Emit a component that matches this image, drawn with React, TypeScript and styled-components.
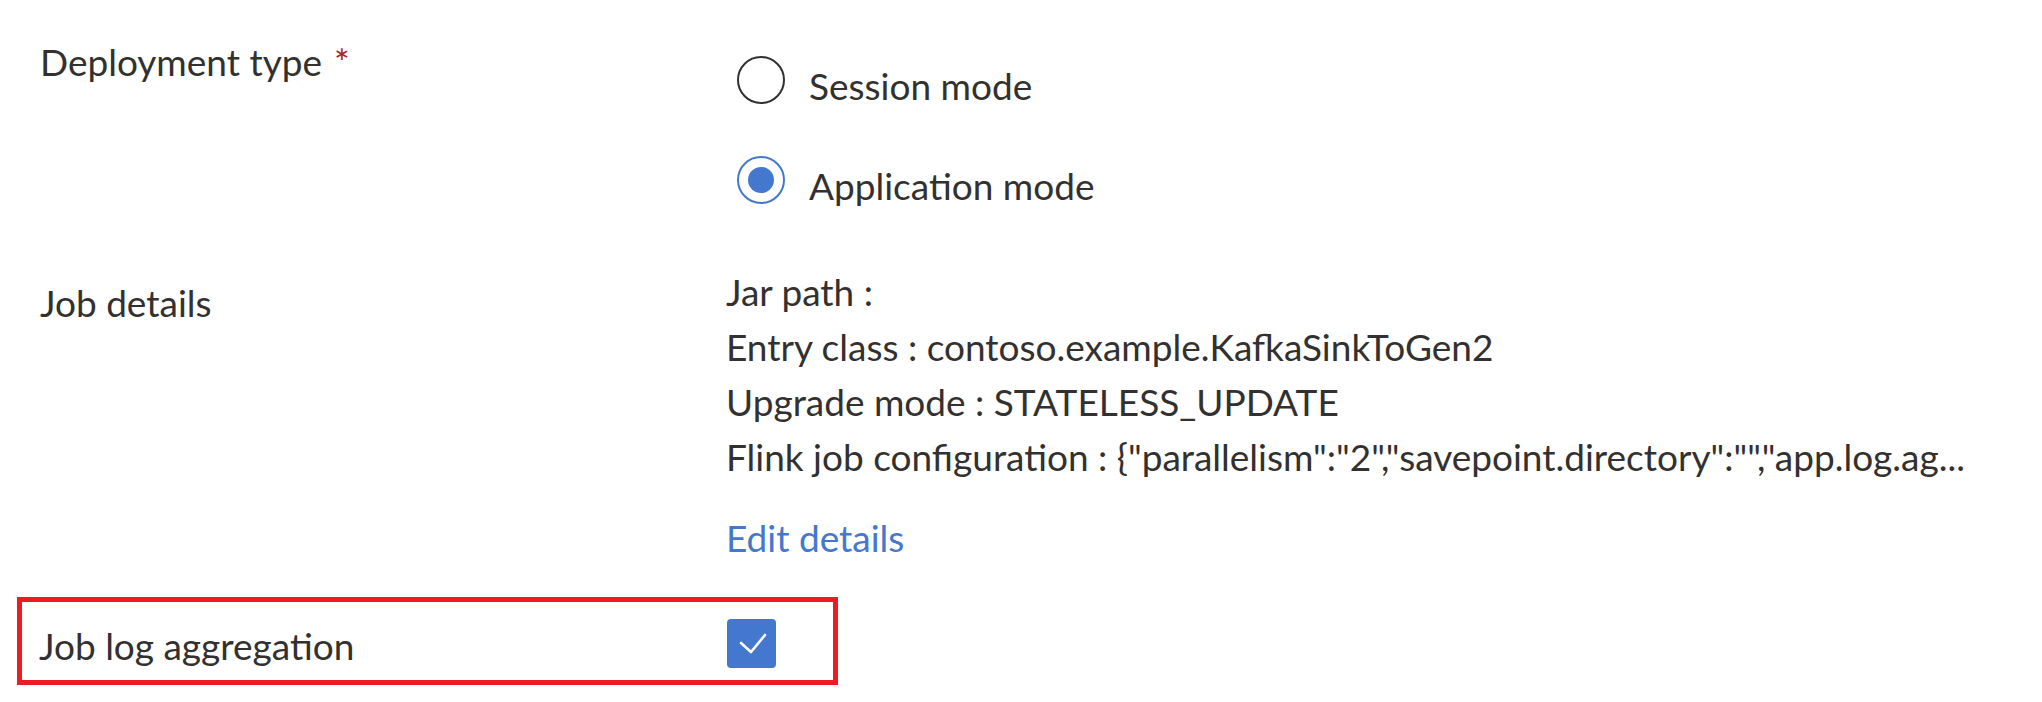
import React from "react";
import styled, { createGlobalStyle } from "styled-components";

const Global = createGlobalStyle`
  html, body { margin: 0; padding: 0; background: #ffffff; }
  body {
    font-family: "Segoe UI", Lato, "Open Sans", sans-serif;
    color: #323130;
  }
`;

const Form = styled.div`
  display: flex;
  flex-direction: column;
  padding: 34px 0 0 40px;
  font-size: 37px;
  line-height: 55px;
`;

const Row = styled.div<{ $gap: number }>`
  display: flex;
  align-items: flex-start;
  margin-top: ${(p) => p.$gap}px;
`;

const Label = styled.div<{ $offset?: number }>`
  width: 686px;
  flex: none;
  margin-top: ${(p) => p.$offset ?? 0}px;
  white-space: nowrap;
`;

const Required = styled.span`
  color: #a4262c;
  padding-left: 12px;
`;

const Values = styled.div<{ $offset?: number }>`
  display: flex;
  flex-direction: column;
  margin-top: ${(p) => p.$offset ?? 0}px;
`;

const RadioGroup = styled.div`
  display: flex;
  flex-direction: column;
  gap: 43px;
  padding-left: 11px;
`;

const RadioRow = styled.label`
  display: flex;
  align-items: flex-start;
  gap: 24px;
`;

const Circle = styled.span<{ $checked?: boolean }>`
  box-sizing: border-box;
  width: 48px;
  height: 48px;
  flex: none;
  border-radius: 50%;
  border: 2.5px solid ${(p) => (p.$checked ? "#4478cf" : "#323130")};
  display: flex;
  align-items: center;
  justify-content: center;
`;

const Dot = styled.span`
  width: 26px;
  height: 26px;
  border-radius: 50%;
  background: #4478cf;
`;

const RadioText = styled.span`
  margin-top: 2px;
`;

const Line = styled.div`
  white-space: nowrap;
`;

const Link = styled.a`
  color: #4478cf;
  text-decoration: none;
  margin-top: 26px;
  cursor: pointer;
`;

const Highlight = styled.div`
  display: flex;
  align-items: flex-start;
  margin: 32px 0 0 -23px;
  width: 821px;
  box-sizing: border-box;
  border: 5px solid #ed1c24;
  padding: 16px 0 7px 17px;
`;

const HLabel = styled.div`
  width: 688px;
  flex: none;
`;

const Checkbox = styled.span`
  width: 49px;
  height: 49px;
  margin-top: 1px;
  border-radius: 4px;
  background: #4478cf;
  display: flex;
  align-items: center;
  justify-content: center;
`;

export default function App() {
  return (
    <>
      <Global />
      <Form>
        <Row $gap={0}>
          <Label>
            Deployment type<Required>*</Required>
          </Label>
          <Values $offset={22}>
            <RadioGroup>
              <RadioRow>
                <Circle />
                <RadioText>Session mode</RadioText>
              </RadioRow>
              <RadioRow>
                <Circle $checked>
                  <Dot />
                </Circle>
                <RadioText>Application mode</RadioText>
              </RadioRow>
            </RadioGroup>
          </Values>
        </Row>
        <Row $gap={51}>
          <Label $offset={11}>Job details</Label>
          <Values>
            <Line>Jar path :</Line>
            <Line>Entry class : contoso.example.KafkaSinkToGen2</Line>
            <Line>Upgrade mode : STATELESS_UPDATE</Line>
            <Line>
              Flink job configuration : {'{"parallelism":"2","savepoint.directory":"","app.log.ag...'}
            </Line>
            <Link>Edit details</Link>
          </Values>
        </Row>
        <Highlight>
          <HLabel>Job log aggregation</HLabel>
          <Checkbox>
            <svg width="36" height="36" viewBox="0 0 36 36" fill="none">
              <path
                d="M7 17 L17 26 L31 9"
                stroke="#ffffff"
                strokeWidth="2.6"
                strokeLinecap="round"
                strokeLinejoin="round"
              />
            </svg>
          </Checkbox>
        </Highlight>
      </Form>
    </>
  );
}
